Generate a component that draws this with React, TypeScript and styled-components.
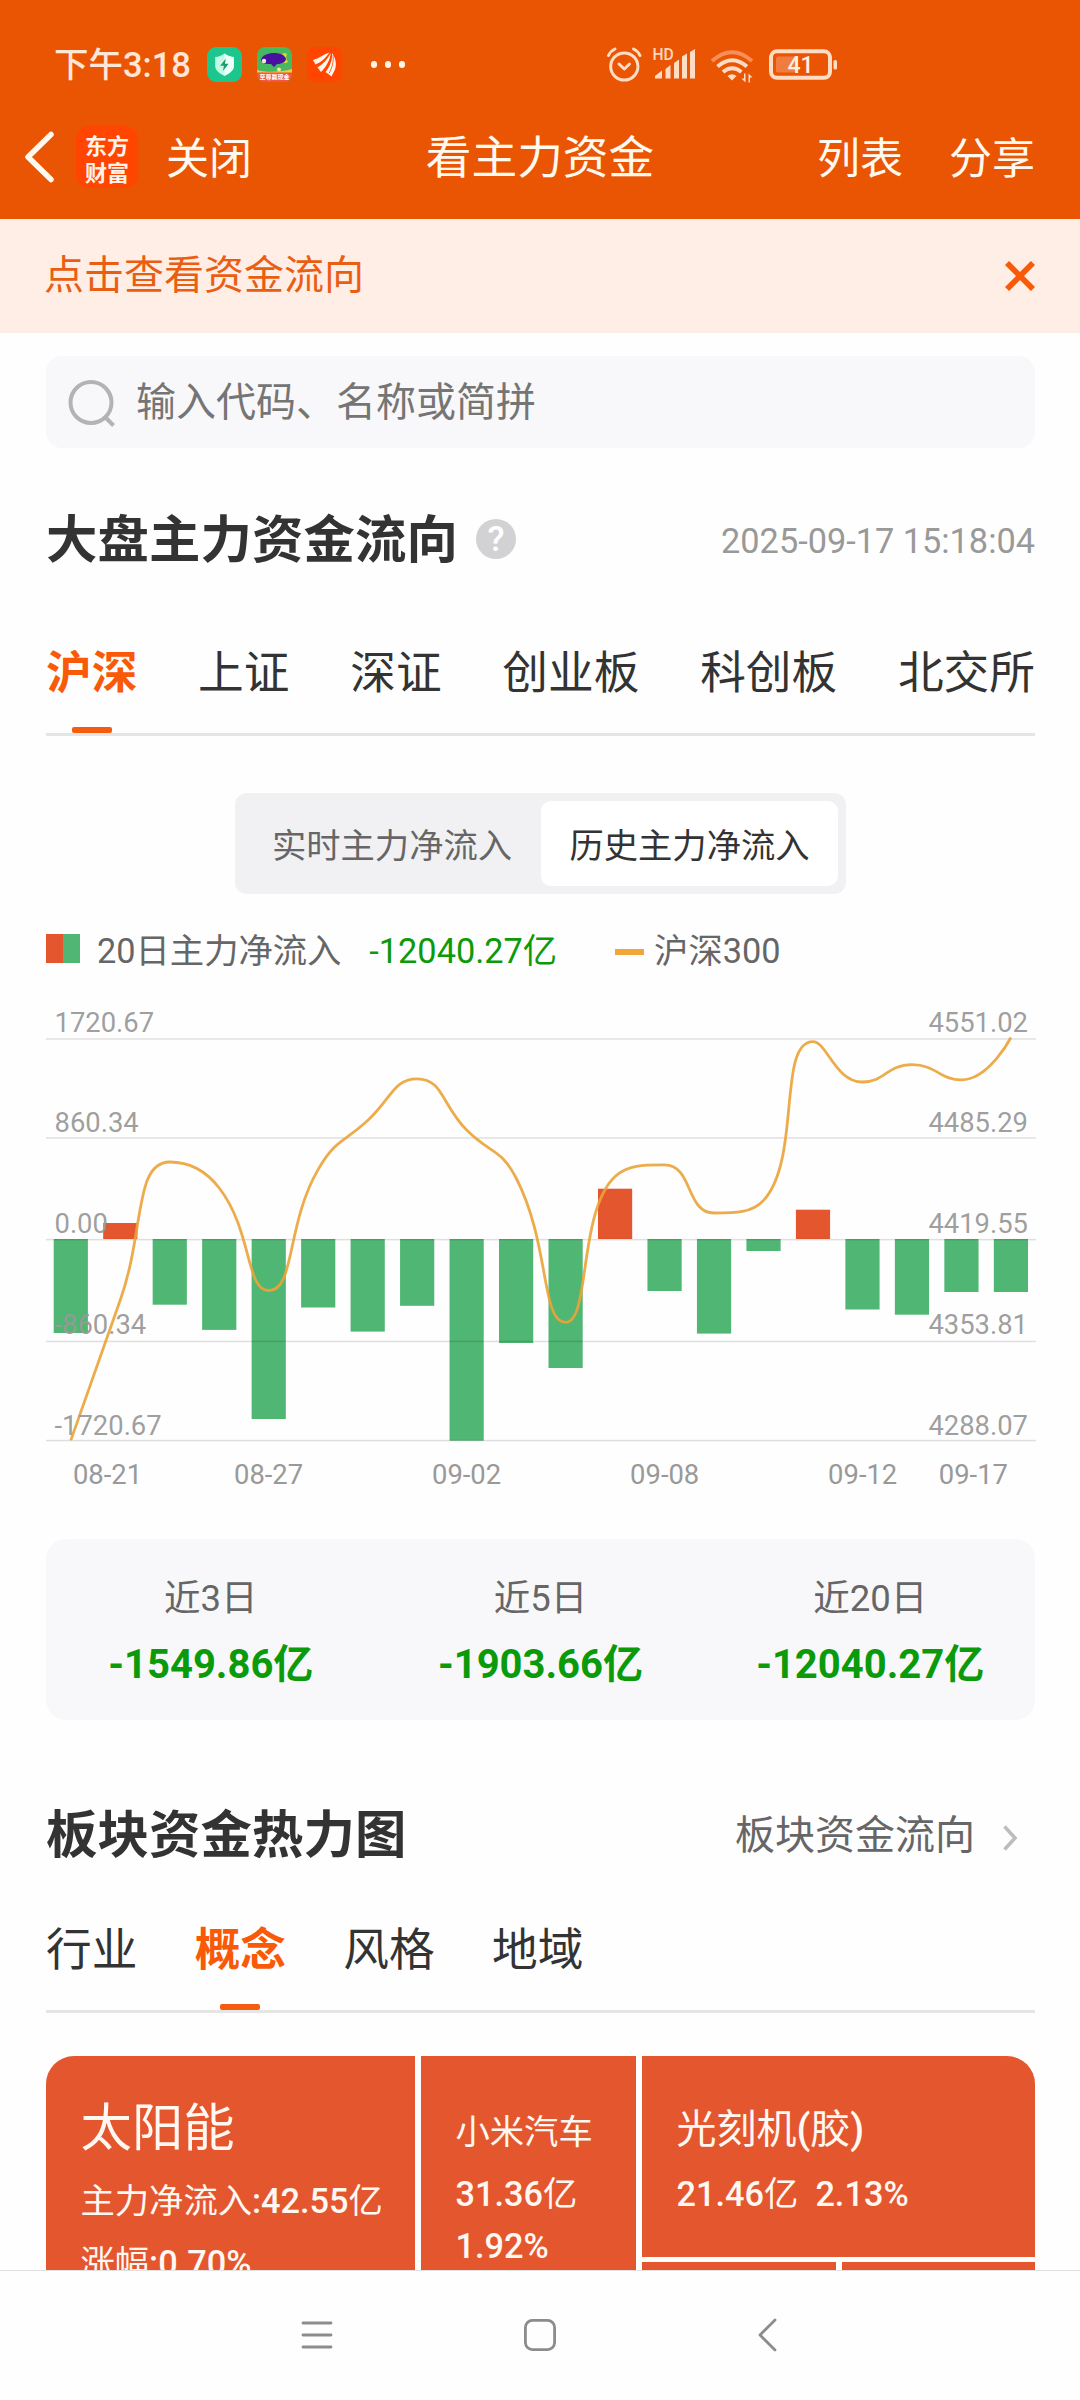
import React from "react";
import styled, { createGlobalStyle } from "styled-components";

const RED = "#e4572e";
const GREEN = "#50b674";
const ACCENT = "#f85a08";
const DOWN = "#0a9a0a";

const GlobalStyle = createGlobalStyle`
  * { box-sizing: border-box; }
  html, body { margin: 0; padding: 0; background: #fff; }
  body { font-family: Roboto, "Noto Sans CJK SC", sans-serif; color: #333; }
`;

const Screen = styled.div`
  width: 1080px;
  height: 2400px;
  display: flex;
  flex-direction: column;
  background: #fefefe;
  overflow: hidden;
`;

/* ---------- header ---------- */

const Header = styled.header`
  flex: none;
  height: 219px;
  background: #ea5504;
  color: #fff9f0;
`;

const StatusBar = styled.div`
  height: 105px;
  display: flex;
  align-items: center;
  padding: 24px 0 0 54px;
  color: #ffe6d6;
`;

const Clock = styled.span`
  width: 153px;
  font-size: 34.5px;
  line-height: 40px;
  font-weight: 500;
  white-space: nowrap;
`;

const NotificationIcons = styled.div`
  display: flex;
  align-items: center;
  gap: 15px;
  width: 398px;
`;

const SystemIcons = styled.div`
  display: flex;
  align-items: center;
`;

const NavRow = styled.div`
  height: 114px;
  display: grid;
  grid-template-columns: 1fr auto 1fr;
  align-items: center;
  padding: 0 22px 10px;
`;

const NavSide = styled.div<{ $end?: boolean }>`
  display: flex;
  align-items: center;
  justify-content: ${(p) => (p.$end ? "flex-end" : "flex-start")};
  gap: ${(p) => (p.$end ? "46px" : "0")};
  padding-right: ${(p) => (p.$end ? "23px" : "0")};
`;

const NavAction = styled.span`
  font-size: 43px;
  line-height: 60px;
  padding-top: 4px;
`;

const NavTitle = styled.h1`
  margin: 0;
  padding-top: 4px;
  font-size: 45.7px;
  line-height: 60px;
  font-weight: 400;
`;

const BrandLogo = styled.div`
  width: 62px;
  height: 62px;
  margin: 0 28px 0 20px;
  display: flex;
  flex-direction: column;
  align-items: center;
  justify-content: center;
  gap: 5px;
  border-radius: 13px;
  background: #ff4500;
  color: #fff4ec;
  font-family: "Noto Sans CJK SC", sans-serif;
  font-size: 22px;
  line-height: 22px;
  font-weight: 700;
`;

/* ---------- notice and search ---------- */

const Notice = styled.div`
  flex: none;
  height: 114px;
  padding: 0 45px 0 44px;
  display: flex;
  align-items: center;
  justify-content: space-between;
  background: #ffeee6;
  color: #ea5e14;
  font-size: 40px;
  line-height: 60px;
`;

const Page = styled.main`
  flex: 1;
  min-height: 0;
  overflow: hidden;
  padding: 23px 45px 0 46px;
`;

const SearchBox = styled.div`
  height: 92px;
  border-radius: 16px;
  background: #f8f8fa;
  display: flex;
  align-items: center;
  padding: 1px 0 0 22px;
  gap: 21px;
  color: #757575;
  font-size: 40px;
  line-height: 60px;
`;

/* ---------- section heading and tabs ---------- */

const SectionHead = styled.div<{ $top: number }>`
  margin-top: ${(p) => p.$top}px;
  height: 80px;
  display: flex;
  align-items: center;
  justify-content: space-between;
`;

const TitleGroup = styled.div`
  display: flex;
  align-items: center;
  gap: 18px;
`;

const SectionTitle = styled.h2`
  margin: 0;
  font-size: 51.4px;
  letter-spacing: 0.1px;
  line-height: 80px;
  font-weight: 700;
  color: #333;
  padding-top: 4px;
`;

const HelpBadge = styled.span`
  width: 40px;
  height: 40px;
  border-radius: 50%;
  background: #d2d2d4;
  color: #fff;
  font-size: 35px;
  line-height: 42px;
  font-weight: 500;
  text-align: center;
`;

const Timestamp = styled.time`
  font-size: 34.3px;
  color: #999;
  padding-top: 4px;
`;

const MoreLink = styled.div`
  display: flex;
  align-items: center;
  gap: 28px;
  padding: 3px 18px 0 0;
  font-size: 40px;
  line-height: 60px;
  color: #666;

  svg {
    margin-top: 4px;
  }
`;

const TabBar = styled.div<{ $spread?: boolean; $top: number }>`
  margin-top: ${(p) => p.$top}px;
  height: 96px;
  display: flex;
  justify-content: ${(p) => (p.$spread ? "space-between" : "flex-start")};
  gap: ${(p) => (p.$spread ? "0" : "57.3px")};
  border-bottom: 3px solid #e5e5e5;
`;

const Tab = styled.div<{ $active?: boolean }>`
  display: flex;
  flex-direction: column;
  align-items: center;
  justify-content: space-between;
  font-size: 45.7px;
  line-height: 68px;
  font-weight: ${(p) => (p.$active ? 700 : 400)};
  color: ${(p) => (p.$active ? ACCENT : "#333")};
  white-space: nowrap;

  &::after {
    content: "";
    width: 40px;
    height: 6px;
    border-radius: 2px;
    background: ${(p) => (p.$active ? "#f45d10" : "transparent")};
  }
`;

const Segmented = styled.div`
  width: 611px;
  height: 101px;
  margin: 57px auto 0;
  padding: 8px;
  display: grid;
  grid-template-columns: 1fr 297px;
  border-radius: 12px;
  background: #f1f1f4;
`;

const Segment = styled.div<{ $active?: boolean }>`
  display: flex;
  align-items: center;
  justify-content: center;
  border-radius: 10px;
  background: ${(p) => (p.$active ? "#fff" : "transparent")};
  color: ${(p) => (p.$active ? "#333" : "#666")};
  font-size: 34.3px;
  line-height: 50px;
  padding-top: 5px;
`;

/* ---------- chart ---------- */

const Legend = styled.div`
  height: 50px;
  margin-top: 31px;
  display: flex;
  align-items: center;
  font-size: 34.3px;
  line-height: 50px;
  padding-top: 1px;
  color: #666;
`;

const BarSwatch = styled.span`
  width: 34px;
  height: 29px;
  margin: -5px 17px 0 0;
  background: linear-gradient(90deg, ${RED} 50%, ${GREEN} 50%);
`;

const LineSwatch = styled.span`
  width: 29px;
  height: 6px;
  margin: 2px 10px 0 58px;
  background: #f0a638;
`;

const LegendValue = styled.span`
  margin-left: 28px;
  color: ${DOWN};
`;

const ChartSvg = styled.svg`
  display: block;
  margin-top: 25px;
  overflow: visible;
  font-size: 27.4px;
  fill: #999;
`;

/* ---------- summary ---------- */

const Summary = styled.div`
  height: 181px;
  margin-top: 77px;
  border-radius: 20px;
  background: #f8f8fa;
  display: grid;
  grid-template-columns: repeat(3, 1fr);
  padding-top: 30px;
`;

const SummaryItem = styled.div`
  display: flex;
  flex-direction: column;
  align-items: center;
  gap: 6px;
`;

const SummaryLabel = styled.span`
  font-size: 36.5px;
  line-height: 60px;
  color: #666;
`;

const SummaryValue = styled.span`
  font-size: 40px;
  line-height: 60px;
  font-weight: 700;
  color: ${DOWN};
`;

/* ---------- heat map ---------- */

const HeatMap = styled.div`
  margin-top: 43px;
  height: 560px;
  display: grid;
  grid-template-columns: 369px 215px 1fr;
  gap: 6px;
  border-radius: 28px;
  overflow: hidden;
`;

const HeatColumn = styled.div`
  display: grid;
  grid-template-rows: 201px 1fr;
  gap: 5px;
`;

const HeatRow = styled.div`
  display: grid;
  grid-template-columns: 1fr 1fr;
  gap: 6px;
`;

const HeatCell = styled.div<{ $top: number }>`
  background: ${RED};
  color: #fff8f2;
  padding: ${(p) => p.$top}px 0 0 34.5px;
  white-space: pre;
`;

const HeatName = styled.div<{ $size: number }>`
  font-size: ${(p) => p.$size}px;
  line-height: 60px;
`;

const HeatValue = styled.div<{ $line: number; $gap?: number }>`
  margin-top: ${(p) => p.$gap ?? 0}px;
  font-size: 34.3px;
  line-height: ${(p) => p.$line}px;
`;

const Figure = styled.span`
  font-weight: 500;
`;

const SystemNav = styled.nav`
  flex: none;
  height: 130px;
  border-top: 1px solid #e2e2e2;
  background: #fefefe;
  display: flex;
  align-items: center;
  justify-content: center;
  gap: 190px;
  padding: 0 0 1px 0;
`;

/* ---------- data ---------- */

const bars = [
  -94, 16, -65.7, -90.9, -180, -68.5, -92.6, -66.8, -201.7, -104,
  -129, 50.3, -52, -94.6, -12, 29.3, -70.5, -75.7, -53, -53,
];

const indexLine = [
  402.4, 262, 124, 150, 252.6, 131.4, 82.5, 40.8, 92, 140,
  284.3, 138.5, 126.9, 175, 162.4, 3.6, 44, 26.7, 41.9, -0.5,
];

const gridRows = [
  { y: 1, left: "1720.67", right: "4551.02", base: -5.7 },
  { y: 100, left: "860.34", right: "4485.29", base: 93.5 },
  { y: 201.7, left: "0.00", right: "4419.55", base: 195.3 },
  { y: 303.5, left: "-860.34", right: "4353.81", base: 296.3 },
  { y: 402.6, left: "-1720.67", right: "4288.07", base: 397.3 },
];

const dates = [
  { x: 61.5, label: "08-21" },
  { x: 222.6, label: "08-27" },
  { x: 420.6, label: "09-02" },
  { x: 618.7, label: "09-08" },
  { x: 816.7, label: "09-12" },
  { x: 927.4, label: "09-17" },
];

const STEP = 49.48;
const ZERO = 201;
const centre = (i: number) => 24.8 + i * STEP;

/* Cubic smoothing whose control points never pass the neighbouring points. */
function smoothPath(ys: number[], smooth = 0.5) {
  const pts = ys.map((y, i) => [centre(i), y]);
  const within = (v: number, a: number, b: number) =>
    Math.max(Math.min(v, Math.max(a, b)), Math.min(a, b));
  let d = `M${pts[0][0]} ${pts[0][1]}`;
  let out = pts[0];
  for (let i = 1; i < pts.length; i++) {
    const [x, y] = pts[i];
    const prev = pts[i - 1];
    const next = pts[i + 1];
    let cin = [x, y];
    let cout = [x, y];
    if (next) {
      const lp = Math.hypot(x - prev[0], y - prev[1]);
      const ln = Math.hypot(next[0] - x, next[1] - y);
      const r = ln / (ln + lp);
      const vx = (next[0] - prev[0]) * smooth;
      const vy = (next[1] - prev[1]) * smooth;
      cout = [within(x + vx * r, next[0], x), within(y + vy * r, next[1], y)];
      cin = [x - ((cout[0] - x) * lp) / ln, y - ((cout[1] - y) * lp) / ln];
      cin = [within(cin[0], prev[0], x), within(cin[1], prev[1], y)];
      cout = [x + ((x - cin[0]) * ln) / lp, y + ((y - cin[1]) * ln) / lp];
    }
    d += `C${out[0]} ${out[1]} ${cin[0]} ${cin[1]} ${x} ${y}`;
    out = cout;
  }
  return d;
}

function FlowChart() {
  return (
    <ChartSvg width="990" height="462" viewBox="0 -38 990 462">
      {bars.map((v, i) => (
        <rect
          key={i}
          x={centre(i) - 17.1}
          y={v > 0 ? ZERO - v : ZERO}
          width={34.2}
          height={Math.abs(v)}
          fill={v > 0 ? RED : GREEN}
        />
      ))}
      {gridRows.map((g) => (
        <rect key={g.y} x="0" y={g.y - 0.8} width="990" height="1.5" fill="#000" fillOpacity="0.12" />
      ))}
      <path d={smoothPath(indexLine)} fill="none" stroke="#eba337" strokeOpacity="0.9" strokeWidth="2.8" />
      {gridRows.map((g) => (
        <g key={g.left} fillOpacity="0.95">
          <text x="8.5" y={g.base}>{g.left}</text>
          <text x="982" y={g.base} textAnchor="end">{g.right}</text>
        </g>
      ))}
      {dates.map((t) => (
        <text key={t.label} x={t.x} y="446" textAnchor="middle">{t.label}</text>
      ))}
    </ChartSvg>
  );
}

/* Sets figures and latin marks one weight above the Chinese text. */
function Mixed({ text }: { text: string }) {
  return (
    <>
      {text.split(/([\x20-\x7e]+)/).map((part, i) =>
        i % 2 ? <Figure key={i}>{part}</Figure> : part,
      )}
    </>
  );
}

/* ---------- icons ---------- */

const ShieldApp = () => (
  <svg width="35" height="35" viewBox="0 0 35 35">
    <rect width="35" height="35" rx="9" fill="#1cc68d" />
    <path d="M17.5 6.5c3 2.4 6 3.3 9.3 3.6v9c0 4.6-4.5 7.6-9.3 10-4.8-2.4-9.3-5.4-9.3-10v-9c3.3-.3 6.3-1.2 9.3-3.6z" fill="#c3fae6" />
    <path d="M17.5 6.5c3 2.4 6 3.3 9.3 3.6v9c0 4.6-4.5 7.6-9.3 10z" fill="#e9fff8" />
    <path d="M18.8 11.5l-5.6 7.3h3.7l-.9 5.2 5.6-7.2h-3.7z" fill="#1a9c72" />
  </svg>
);

const AppBannerText = styled.text`
  font-family: "Noto Sans CJK SC", sans-serif;
  font-size: 6px;
  font-weight: 700;
  fill: #fff;
`;

const GameApp = () => (
  <svg width="35" height="35" viewBox="0 0 35 35">
    <clipPath id="game"><rect width="35" height="35" rx="8" /></clipPath>
    <g clipPath="url(#game)">
      <rect width="35" height="35" fill="#45b860" />
      <path d="M24 9c1-3 4-4 6-2l-1 4 2 4c-2 2-5 1-7-1z" fill="#d5d83a" />
      <path d="M4 13c1-5 7-7 13-7 6 0 11 2 12 6 0 3-5 5-9 5l-3 3-3-3c-4 0-9 0-10-4z" fill="#4a10a0" />
      <circle cx="7" cy="14" r="2.2" fill="#f1ead2" />
      <path d="M0 23c9 3 25 2 35-1v5H0z" fill="#f0cc3f" />
      <circle cx="22" cy="22.5" r="2" fill="#f6e6a0" />
      <path d="M0 25.500h35v10H0z" fill="#ef5646" />
      <AppBannerText x="17.5" y="32.3" textAnchor="middle">至尊赢现金</AppBannerText>
    </g>
  </svg>
);

const FinanceApp = () => (
  <svg width="35" height="35" viewBox="0 0 35 35">
    <rect width="35" height="35" rx="8" fill="#ff4500" />
    <g fill="#fff5e8">
      <path d="M22.500 5.500C19 10.500 14 15.500 8.500 17.500L6 13C12 11.500 17 7 22.500 5.500z" />
      <path d="M23.800 6C23 13 19.500 19.500 14 25L10.500 20.500C16.500 17 20.500 12 23.800 6z" />
      <path d="M25 6c3.500 4.500 5 11 3 16.500L24.500 29.500 18.500 25C23 19.500 25.500 13 25 6z" />
    </g>
    <path d="M26 8c.8 6-.5 12-4 18.500" stroke="#ff4500" strokeWidth=".8" fill="none" />
  </svg>
);

const MoreDots = styled.div`
  display: flex;
  gap: 7.5px;
  margin-left: 13.5px;

  i {
    width: 6.5px;
    height: 6.5px;
    border-radius: 50%;
    background: #fff5e6;
  }
`;

const SignalText = styled.text`
  font-size: 15.6px;
  font-weight: 500;
  fill: #ffd9c0;
`;

const BatteryText = styled.text`
  font-size: 23px;
  font-weight: 500;
  fill: #fff0e4;
`;

const StatusGlyphs = () => (
  <svg width="240" height="50" viewBox="605 39.5 240 50" fill="none" stroke="#ffdcc4">
    <g strokeWidth="3" strokeLinecap="round" strokeLinejoin="round">
      <circle cx="624.3" cy="66" r="13.6" />
      <path d="M619 63.500l5.300 5 5.200-5" />
      <path d="M608.500 55q2-4.500 6.500-6.500M640 55q-2-4.500-6.500-6.500" />
    </g>
    <g stroke="none" fill="#ffdcc4">
      <SignalText x="652.5" y="59">HD</SignalText>
      <path d="M655 78v-2.500l7-5.500V78zM665.500 78V68.500l5-4V78zM674 78V62.500l5-3.500V78zM682 78V56l5-3v25zM690 78V51.500l5-3V78z" />
      <path d="M727.5 75.500q4.500-3.500 9 0l-4.500 4.500z" />
      <path d="M745.500 73v9l-4-4h2.500v-5zM748.500 82v-9l4 4h-2.500v5z" />
    </g>
    <g strokeWidth="4">
      <path d="M712 60.500q20-17.500 40 0" stroke="#f88f58" />
      <path d="M717.5 66q14.700-12.500 29.400 0" />
      <path d="M723 71.500q9.200-7.600 18.400 0" />
    </g>
    <rect x="776" y="56" width="20" height="16" rx="2" fill="#f07c40" stroke="none" />
    <rect x="771" y="50.800" width="59" height="26.500" rx="6" strokeWidth="4" />
    <rect x="833.5" y="59.500" width="3.5" height="9.500" rx="1.5" fill="#ffdcc4" stroke="none" />
    <BatteryText x="800.5" y="72.500" textAnchor="middle" stroke="none">41</BatteryText>
  </svg>
);

const BackArrow = () => (
  <svg width="34" height="56" viewBox="0 0 34 56" fill="none" stroke="#fff9f0" strokeWidth="5.5" strokeLinecap="round" strokeLinejoin="round">
    <path d="M29 5.500L6 28l23 22.500" />
  </svg>
);

const CloseIcon = () => (
  <svg width="30" height="30" viewBox="0 0 30 30" stroke="#f85a08" strokeWidth="5.8">
    <path d="M2 2l26 26M28 2L2 28" />
  </svg>
);

const SearchIcon = () => (
  <svg width="47" height="48" viewBox="0 0 47 48" fill="none" stroke="#b3b3b3" strokeWidth="4">
    <circle cx="23" cy="23.5" r="20.5" />
    <path d="M37 38l8.500 8.500" />
  </svg>
);

const ChevronIcon = () => (
  <svg width="14" height="26" viewBox="0 0 14 26" fill="none" stroke="#bdbdbd" strokeWidth="3.5">
    <path d="M1.500 1.500L12 13 1.500 24.500" />
  </svg>
);

const MenuIcon = () => (
  <svg width="32" height="34" viewBox="0 0 32 34" stroke="#8c8c8c" strokeWidth="2.8" strokeLinecap="round">
    <path d="M2 5h28M2 17h28M2 29h28" />
  </svg>
);

const HomeIcon = () => (
  <svg width="34" height="34" viewBox="0 0 34 34" fill="none" stroke="#8c8c8c" strokeWidth="2.8">
    <rect x="2.4" y="2.4" width="29.2" height="29.2" rx="7" />
  </svg>
);

const SystemBackIcon = () => (
  <svg width="32" height="34" viewBox="0 0 32 34" fill="none" stroke="#8c8c8c" strokeWidth="2.8" strokeLinecap="round" strokeLinejoin="round">
    <path d="M28 2L13 17l15 15" />
  </svg>
);

export default function App() {
  return (
    <Screen>
      <GlobalStyle />
      <Header>
        <StatusBar>
          <Clock>下午3:18</Clock>
          <NotificationIcons>
            <ShieldApp />
            <GameApp />
            <FinanceApp />
            <MoreDots><i /><i /><i /></MoreDots>
          </NotificationIcons>
          <SystemIcons>
            <StatusGlyphs />
          </SystemIcons>
        </StatusBar>
        <NavRow>
          <NavSide>
            <BackArrow />
            <BrandLogo>
              <span>东方</span>
              <span>财富</span>
            </BrandLogo>
            <NavAction>关闭</NavAction>
          </NavSide>
          <NavTitle>看主力资金</NavTitle>
          <NavSide $end>
            <NavAction>列表</NavAction>
            <NavAction>分享</NavAction>
          </NavSide>
        </NavRow>
      </Header>

      <Notice>
        <span>点击查看资金流向</span>
        <CloseIcon />
      </Notice>

      <Page>
        <SearchBox>
          <SearchIcon />
          <span>输入代码、名称或简拼</span>
        </SearchBox>

        <SectionHead $top={51}>
          <TitleGroup>
            <SectionTitle>大盘主力资金流向</SectionTitle>
            <HelpBadge>?</HelpBadge>
          </TitleGroup>
          <Timestamp>2025-09-17 15:18:04</Timestamp>
        </SectionHead>

        <TabBar $spread $top={61}>
          <Tab $active>沪深</Tab>
          <Tab>上证</Tab>
          <Tab>深证</Tab>
          <Tab>创业板</Tab>
          <Tab>科创板</Tab>
          <Tab>北交所</Tab>
        </TabBar>

        <Segmented>
          <Segment>实时主力净流入</Segment>
          <Segment $active>历史主力净流入</Segment>
        </Segmented>

        <Legend>
          <BarSwatch />
          20日主力净流入
          <LegendValue>-12040.27亿</LegendValue>
          <LineSwatch />
          沪深300
        </Legend>

        <FlowChart />

        <Summary>
          <SummaryItem>
            <SummaryLabel>近3日</SummaryLabel>
            <SummaryValue>-1549.86亿</SummaryValue>
          </SummaryItem>
          <SummaryItem>
            <SummaryLabel>近5日</SummaryLabel>
            <SummaryValue>-1903.66亿</SummaryValue>
          </SummaryItem>
          <SummaryItem>
            <SummaryLabel>近20日</SummaryLabel>
            <SummaryValue>-12040.27亿</SummaryValue>
          </SummaryItem>
        </Summary>

        <SectionHead $top={74}>
          <SectionTitle>板块资金热力图</SectionTitle>
          <MoreLink>
            板块资金流向
            <ChevronIcon />
          </MoreLink>
        </SectionHead>

        <TabBar $top={43}>
          <Tab>行业</Tab>
          <Tab $active>概念</Tab>
          <Tab>风格</Tab>
          <Tab>地域</Tab>
        </TabBar>

        <HeatMap>
          <HeatCell $top={43}>
            <HeatName $size={51.4}>太阳能</HeatName>
            <HeatValue $line={62} $gap={11}><Mixed text="主力净流入:42.55亿" /></HeatValue>
            <HeatValue $line={62}><Mixed text="涨幅:0.70%" /></HeatValue>
          </HeatCell>
          <HeatCell $top={46}>
            <HeatName $size={34.3}>小米汽车</HeatName>
            <HeatValue $line={52} $gap={6}><Mixed text="31.36亿" /></HeatValue>
            <HeatValue $line={52}><Mixed text="1.92%" /></HeatValue>
          </HeatCell>
          <HeatColumn>
            <HeatCell $top={44}>
              <HeatName $size={40}><Mixed text="光刻机(胶)" /></HeatName>
              <HeatValue $line={53} $gap={8}><Mixed text="21.46亿  2.13%" /></HeatValue>
            </HeatCell>
            <HeatRow>
              <HeatCell $top={0} />
              <HeatCell $top={0} />
            </HeatRow>
          </HeatColumn>
        </HeatMap>
      </Page>

      <SystemNav>
        <MenuIcon />
        <HomeIcon />
        <SystemBackIcon />
      </SystemNav>
    </Screen>
  );
}
